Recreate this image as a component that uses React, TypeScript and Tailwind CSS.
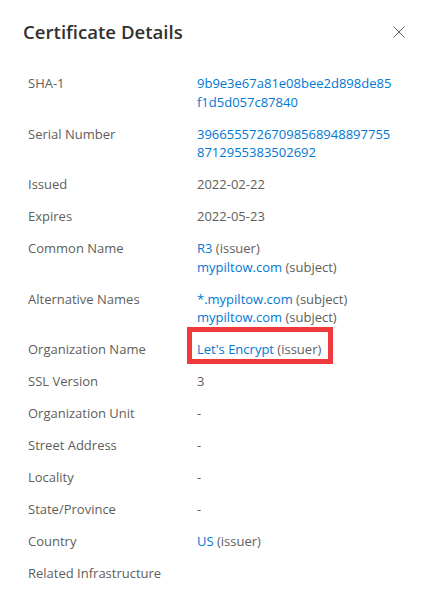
import React from "react";

type Part = { text: string; link?: boolean };
type Row = { label: string; lines?: Part[][]; boxed?: boolean };

const rows: Row[] = [
  { label: "SHA-1", lines: [[{ text: "9b9e3e67a81e08bee2d898de85", link: true }], [{ text: "f1d5d057c87840", link: true }]] },
  { label: "Serial Number", lines: [[{ text: "39665557267098568948897755", link: true }], [{ text: "8712955383502692", link: true }]] },
  { label: "Issued", lines: [[{ text: "2022-02-22" }]] },
  { label: "Expires", lines: [[{ text: "2022-05-23" }]] },
  { label: "Common Name", lines: [[{ text: "R3", link: true }, { text: " (issuer)" }], [{ text: "mypiltow.com", link: true }, { text: " (subject)" }]] },
  { label: "Alternative Names", lines: [[{ text: "*.mypiltow.com", link: true }, { text: " (subject)" }], [{ text: "mypiltow.com", link: true }, { text: " (subject)" }]] },
  { label: "Organization Name", lines: [[{ text: "Let's Encrypt", link: true }, { text: " (issuer)" }]], boxed: true },
  { label: "SSL Version", lines: [[{ text: "3" }]] },
  { label: "Organization Unit", lines: [[{ text: "-" }]] },
  { label: "Street Address", lines: [[{ text: "-" }]] },
  { label: "Locality", lines: [[{ text: "-" }]] },
  { label: "State/Province", lines: [[{ text: "-" }]] },
  { label: "Country", lines: [[{ text: "US", link: true }, { text: " (issuer)" }]] },
  { label: "Related Infrastructure" },
];

export default function App() {
  return (
    <div
      className="w-[427px] h-[604px] bg-white overflow-hidden"
      style={{ fontFamily: '"Open Sans", "Noto Sans", sans-serif' }}
    >
      <div className="flex items-center justify-between pl-[23px] pr-[22px] pt-[18px]">
        <h1 className="text-[18.6px] leading-[28px] font-semibold text-[#323130]">Certificate Details</h1>
        <svg width="12" height="12" viewBox="0 0 12 12" className="text-[#605e5c]">
          <path d="M0.5 0.5 L11.5 11.5 M11.5 0.5 L0.5 11.5" stroke="currentColor" strokeWidth="1" fill="none" />
        </svg>
      </div>
      <div className="mt-[28px] pl-[28px] flex flex-col gap-[13.5px] text-[13px] leading-[18.5px]">
        {rows.map((r) => (
          <div key={r.label} className="flex">
            <div className="w-[169px] shrink-0 text-[#605e5c]">{r.label}</div>
            <div className="text-[#323130]">
              {r.lines?.map((line, i) => (
                <div key={i} className="relative">
                  {r.boxed && (
                    <div className="absolute left-[-10px] top-[-13px] w-[146px] h-[37px] border-[5px] border-[#f0393d]" />
                  )}
                  {line.map((p, j) => (
                    <span key={j} className={p.link ? "text-[#0078d4]" : "text-[#605e5c]"}>
                      {p.text}
                    </span>
                  ))}
                </div>
              ))}
            </div>
          </div>
        ))}
      </div>
    </div>
  );
}
